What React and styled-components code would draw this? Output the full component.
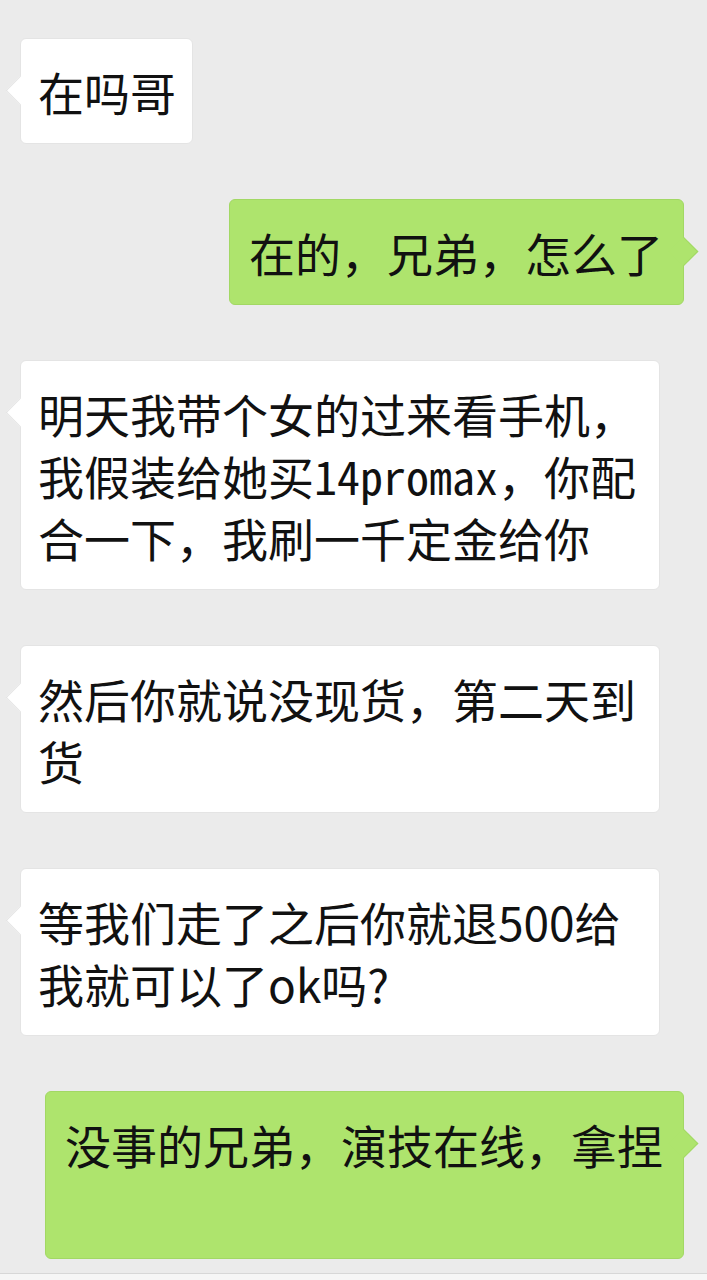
import React from "react";
import styled, { createGlobalStyle } from "styled-components";

const GlobalStyle = createGlobalStyle`
  html, body {
    margin: 0;
    padding: 0;
    background: #ebebeb;
  }
  * {
    box-sizing: border-box;
  }
`;

const Screen = styled.div`
  display: flex;
  flex-direction: column;
  height: 1280px;
  width: 707px;
  overflow: hidden;
  background: #ebebeb;
  font-family: "Noto Sans CJK SC", "Noto Sans", sans-serif;
`;

const Thread = styled.div`
  flex: 1;
  display: flex;
  flex-direction: column;
  gap: 55px;
  padding: 38px 23px 0 20px;
`;

const Row = styled.div`
  display: flex;
  justify-content: ${(p) => (p.$mine ? "flex-end" : "flex-start")};
`;

const Bubble = styled.div`
  position: relative;
  max-width: ${(p) => (p.$mine ? "642px" : "640px")};
  padding: ${(p) => (p.$mine ? "21px 20px 21px 19px" : "21px 16px 21px 17px")};
  background: ${(p) => (p.$mine ? "#aee46d" : "#ffffff")};
  border: 1px solid ${(p) => (p.$mine ? "#a2d864" : "#e4e4e4")};
  border-radius: 6px;
  color: #111;
  font-size: 46px;
  line-height: 62px;
  word-break: break-all;

  &::before {
    content: "";
    position: absolute;
    top: 41px;
    width: 20px;
    height: 20px;
    background: inherit;
    transform: rotate(45deg);
    ${(p) =>
      p.$mine
        ? `right: -11px; border-top: 1px solid #a2d864; border-right: 1px solid #a2d864;`
        : `left: -11px; border-bottom: 1px solid #e4e4e4; border-left: 1px solid #e4e4e4;`}
  }
`;

const Mono = styled.span`
  font-family: "Noto Sans Mono CJK SC", "Noto Sans CJK SC", monospace;
`;

const BottomBar = styled.div`
  height: 7px;
  background: #f6f6f6;
  border-top: 1px solid #d7d7d7;
`;

const Message = ({ mine, children }) => (
  <Row $mine={mine}>
    <Bubble $mine={mine}>{children}</Bubble>
  </Row>
);

export default function App() {
  return (
    <>
      <GlobalStyle />
      <Screen>
        <Thread>
          <Message>在吗哥</Message>
          <Message mine>在的，兄弟，怎么了</Message>
          <Message>
            明天我带个女的过来看手机，我假装给她买<Mono>14promax</Mono>，你配合一下，我刷一千定金给你
          </Message>
          <Message>然后你就说没现货，第二天到货</Message>
          <Message>等我们走了之后你就退500给我就可以了ok吗?</Message>
          <Message mine>
            没事的兄弟，演技在线，拿捏
            <br />
            {"\u00a0"}
          </Message>
        </Thread>
        <BottomBar />
      </Screen>
    </>
  );
}
